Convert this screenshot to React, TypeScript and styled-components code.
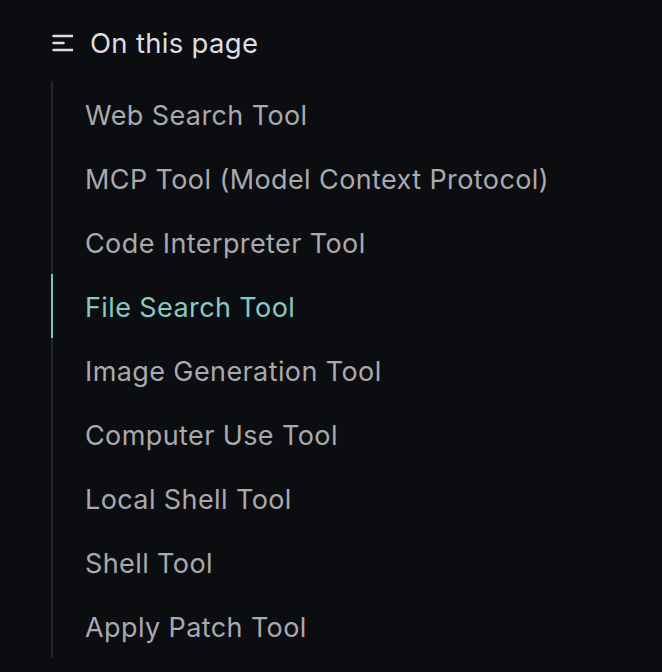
import React from "react";
import styled, { createGlobalStyle } from "styled-components";

const items = [
  "Web Search Tool",
  "MCP Tool (Model Context Protocol)",
  "Code Interpreter Tool",
  "File Search Tool",
  "Image Generation Tool",
  "Computer Use Tool",
  "Local Shell Tool",
  "Shell Tool",
  "Apply Patch Tool",
];

const ACTIVE = "File Search Tool";

function App() {
  return (
    <>
      <GlobalStyle />
      <Page>
        <Nav>
          <Header>
            <svg width="22" height="20" viewBox="0 0 22 20" fill="none">
              <path
                d="M2.5 3h19M2.5 10h10M2.5 17h19"
                stroke="currentColor"
                strokeWidth="2.5"
                strokeLinecap="round"
              />
            </svg>
            <span>On this page</span>
          </Header>
          <List>
            {items.map((item) => (
              <Item key={item} $active={item === ACTIVE}>
                {item}
              </Item>
            ))}
          </List>
        </Nav>
      </Page>
    </>
  );
}

const GlobalStyle = createGlobalStyle`
  html, body {
    margin: 0;
    background: #0c0d10;
  }
`;

const Page = styled.div`
  width: 662px;
  height: 672px;
  background: #0c0d10;
  font-family: Inter, "Noto Sans", sans-serif;
  padding: 25px 0 0 51px;
  box-sizing: border-box;
`;

const Nav = styled.nav`
  display: flex;
  flex-direction: column;
`;

const Header = styled.div`
  display: flex;
  align-items: center;
  gap: 17px;
  height: 36px;
  color: #dedee2;
  font-size: 27.5px;
  font-weight: 400;
  letter-spacing: 0.3px;
  svg {
    color: #dedee2;
  }
`;

const List = styled.ul`
  list-style: none;
  margin: 20px 0 0;
  padding: 1px 0 0;
  border-left: 2px solid #24252a;
`;

const Item = styled.li<{ $active?: boolean }>`
  box-sizing: border-box;
  height: 64px;
  display: flex;
  align-items: center;
  padding: 2px 0 0 32px;
  margin-left: -2px;
  border-left: 2px solid ${(p) => (p.$active ? "#7cc8bc" : "transparent")};
  color: ${(p) => (p.$active ? "#86cbc0" : "#a9a9ae")};
  font-size: 27px;
  letter-spacing: 0.4px;
  cursor: pointer;
`;

export default App;
